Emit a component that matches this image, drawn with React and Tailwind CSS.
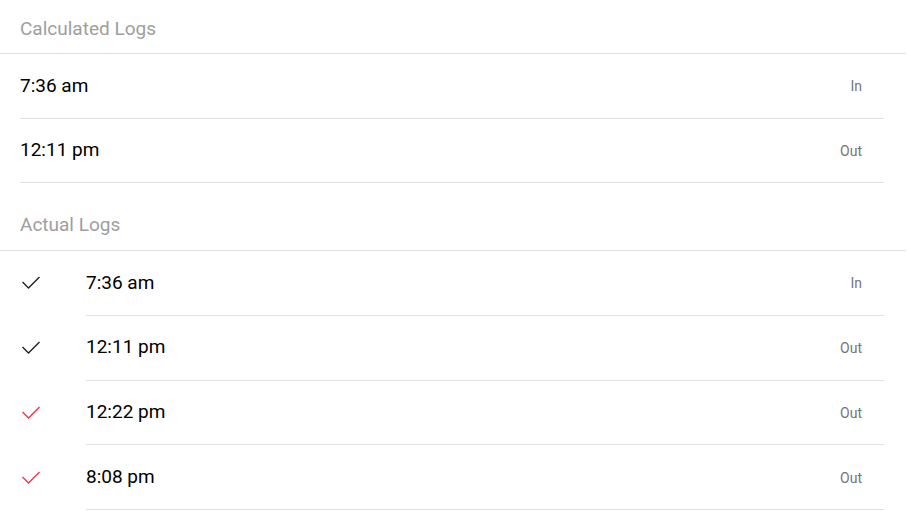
const calculated = [
  { time: '7:36 am', type: 'In' },
  { time: '12:11 pm', type: 'Out' },
];

const actual = [
  { time: '7:36 am', type: 'In', red: false },
  { time: '12:11 pm', type: 'Out', red: false },
  { time: '12:22 pm', type: 'Out', red: true },
  { time: '8:08 pm', type: 'Out', red: true },
];

function Check({ red }) {
  return (
    <svg width="20" height="16" viewBox="0 0 20 16" fill="none">
      <polyline
        points="3,7.5 8.5,13 19,2.5"
        stroke={red ? '#f5334a' : '#222'}
        strokeWidth="1.4"
        strokeLinecap="square"
      />
    </svg>
  );
}

export default function App() {
  return (
    <div className="min-h-screen w-[906px] bg-white font-['Roboto',sans-serif]">
      <div className="flex h-[54px] items-end border-b border-[#e0e0e0] px-5 pb-[14px] text-[19px] leading-[20px] text-[#9e9e9e]">
        Calculated Logs
      </div>
      <div className="pl-5 pr-[22px]">
        {calculated.map((row) => (
          <div key={row.time} className="flex h-[64.5px] items-center border-b border-[#e0e0e0] pr-[22px]">
            <span className="flex-1 text-[19px] text-black">{row.time}</span>
            <span className="pt-[2px] text-[14px] text-[#757575]">{row.type}</span>
          </div>
        ))}
      </div>
      <div className="flex h-[68px] items-end border-b border-[#e0e0e0] px-5 pb-[15px] text-[19px] leading-[20px] text-[#9e9e9e]">
        Actual Logs
      </div>
      <div className="pl-5 pr-[22px]">
        {actual.map((row) => (
          <div key={row.time} className="flex h-[64.75px] items-stretch">
            <div className="flex w-[66px] items-center">
              <Check red={row.red} />
            </div>
            <div className="flex flex-1 items-center border-b border-[#e0e0e0] pr-[22px]">
              <span className="flex-1 text-[19px] text-black">{row.time}</span>
              <span className="pt-[2px] text-[14px] text-[#757575]">{row.type}</span>
            </div>
          </div>
        ))}
      </div>
    </div>
  );
}
